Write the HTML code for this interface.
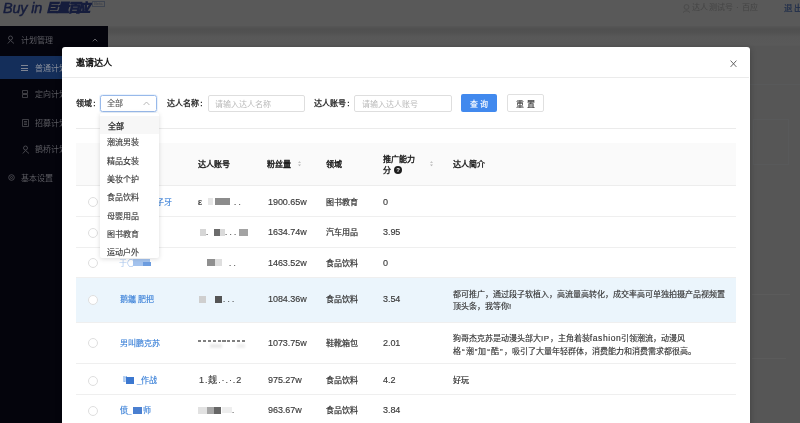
<!DOCTYPE html>
<html lang="zh-CN"><head><meta charset="utf-8">
<style>
*{margin:0;padding:0;box-sizing:border-box}
html,body{width:800px;height:423px;overflow:hidden;background:#565656;font-family:"Liberation Sans",sans-serif;}
.a{position:absolute}
.mi{position:absolute;color:#5c5c62;font-size:8px;line-height:10px;white-space:nowrap;margin-top:0.8px;filter:blur(0.25px)}
.t{position:absolute;white-space:nowrap;color:#333;font-size:8px;line-height:10px;margin-top:1.4px;-webkit-text-stroke:0.22px #333}
.th{color:#1c1c1c;-webkit-text-stroke:0.38px #1c1c1c}
.n{font-size:9px;letter-spacing:-0.05px;color:#3a3a3a;-webkit-text-stroke:0.15px #3a3a3a;margin-top:0.2px;margin-left:0.5px}
.line{position:absolute;background:#ebebeb;height:1px}
.row{position:absolute;left:76px;width:660px;border-bottom:1px solid #efefef}
.radio{position:absolute;width:10px;height:10px;border:1px solid #dedede;border-radius:50%;background:#fff}
.nm{color:#3d82d8;-webkit-text-stroke:0.15px #3d82d8}
.blk{position:absolute;height:7px}
.opt{position:absolute;left:99px;width:59px;height:18.3px;padding-left:8px;padding-top:1px;font-size:8px;line-height:18.3px;color:#3a3a3a;white-space:nowrap;-webkit-text-stroke:0.15px #3a3a3a}
.bl{filter:blur(0.35px)}
body>div,body>svg{will-change:transform}
</style></head><body>
<!-- page header -->
<div class="a" style="left:0;top:0;width:800px;height:26px;background:#595959"></div>
<div class="a" style="left:108px;top:26px;width:692px;height:21px;background:linear-gradient(#565656 0px,#505050 3px,#525252 7px,#585858 11px,#595959 19px,#555 21px)"></div>

<!-- logo -->
<div class="a" style="left:3px;top:0px;font-size:14.5px;line-height:16px;color:#161d3c;font-style:italic;letter-spacing:-0.2px;-webkit-text-stroke:0.45px #161d3c">Buy in</div>
<div class="a bl" style="left:46px;top:1px;font-size:12px;line-height:14px;color:#4a5080;font-weight:bold;font-style:italic;letter-spacing:-1.2px;-webkit-text-stroke:0.9px #161d3c">巨量百应</div>
<div class="a" style="left:91.5px;top:1px;width:12.5px;height:5.5px;border:0.8px solid #3e4450;border-radius:0.5px;font-size:4px;line-height:4px;color:#3a3f4a;text-align:center;overflow:hidden">Beta</div>
<!-- header right -->
<svg class="a" style="left:682px;top:3px" width="10" height="10" viewBox="0 0 10 10"><circle cx="4.5" cy="4" r="2.4" fill="none" stroke="#4a4a4a" stroke-width="0.9"/><path d="M1 9.5Q4.5 6 8 9.5" fill="none" stroke="#4a4a4a" stroke-width="0.9"/></svg>
<div class="a" style="left:692px;top:3px;font-size:8px;line-height:10px;color:#444;white-space:nowrap;letter-spacing:0.3px;filter:blur(0.4px)">达人测试号 · 百应</div>
<div class="a" style="left:783.5px;top:3px;font-size:8.5px;line-height:11px;color:#1a2a4a;white-space:nowrap;letter-spacing:1.2px;-webkit-text-stroke:0.15px #1a2a4a">退出</div>

<!-- sidebar -->
<div class="a" style="left:0;top:26px;width:108px;height:397px;background:#04040c"></div>
<svg class="a" style="left:7px;top:35px" width="8" height="9" viewBox="0 0 8 9"><circle cx="3.5" cy="3" r="2" fill="none" stroke="#56565c" stroke-width="0.8"/><path d="M0.8 8.5L3.5 5.5L7 8.5" fill="none" stroke="#56565c" stroke-width="0.8"/></svg>
<div class="mi" style="left:21px;top:35px">计划管理</div>
<svg class="a" style="left:92px;top:38px" width="6" height="4" viewBox="0 0 6 4"><path d="M0.7 3.3L3 1L5.3 3.3" fill="none" stroke="#77777b" stroke-width="0.8"/></svg>
<div class="a" style="left:0;top:56px;width:108px;height:23px;background:#142e5a"></div>
<div class="a" style="left:21px;top:65px;width:7px;height:0.8px;background:#7f8593"></div>
<div class="a" style="left:21px;top:67.5px;width:7px;height:0.8px;background:#7f8593"></div>
<div class="a" style="left:21px;top:70px;width:7px;height:0.8px;background:#7f8593"></div>
<div class="mi" style="left:35px;top:63px;color:#8a909c">普通计划</div>
<svg class="a" style="left:22px;top:90px" width="6" height="8" viewBox="0 0 6 8"><path d="M0.5 0.5H5.5V3.5H0.5ZM0.5 4.5H5.5V7.5H0.5Z" fill="none" stroke="#56565c" stroke-width="0.7"/></svg>
<div class="mi" style="left:35px;top:89px">定向计划</div>
<svg class="a" style="left:22px;top:119px" width="7" height="8" viewBox="0 0 7 8"><path d="M0.5 0.5H6.5V7.5H0.5ZM2 2.5H5M2 4H5M2 5.5H5" fill="none" stroke="#56565c" stroke-width="0.7"/></svg>
<div class="mi" style="left:35px;top:118px">招募计划</div>
<svg class="a" style="left:22px;top:145px" width="8" height="9" viewBox="0 0 8 9"><circle cx="3.5" cy="3" r="2" fill="none" stroke="#56565c" stroke-width="0.8"/><path d="M0.8 8.5L3.5 5.5L7 8.5" fill="none" stroke="#56565c" stroke-width="0.8"/></svg>
<div class="mi" style="left:35px;top:144px">鹊桥计划</div>
<svg class="a" style="left:8px;top:174px" width="7" height="7" viewBox="0 0 7 7"><circle cx="3.5" cy="3.5" r="2.8" fill="none" stroke="#56565c" stroke-width="0.8"/><circle cx="3.5" cy="3.5" r="1" fill="none" stroke="#56565c" stroke-width="0.7"/></svg>
<div class="mi" style="left:21px;top:173px">基本设置</div>

<!-- right page faint structure -->
<div class="a" style="left:750px;top:84px;width:50px;height:1px;background:#58595a"></div>
<div class="a" style="left:753px;top:119px;width:36px;height:46px;border:1px solid #58595a"></div>
<div class="a" style="left:752px;top:294px;width:38px;height:1px;background:#5b5b5b"></div>
<div class="a" style="left:752px;top:358px;width:34px;height:1px;background:#5b5b5b"></div>

<!-- modal -->
<div class="a" style="left:62px;top:47px;width:687.5px;height:400px;background:#fff;border-radius:3px;box-shadow:0 2px 6px rgba(0,0,0,.25)"></div>
<div class="t" style="margin-top:0;left:76px;top:57px;font-size:9px;line-height:12px;color:#111;-webkit-text-stroke:0.4px #111">邀请达人</div>
<svg class="a" style="left:730px;top:59.5px" width="7" height="7.5" viewBox="0 0 7 7.5"><path d="M0.6 0.6L6.4 6.9M6.4 0.6L0.6 6.9" stroke="#555" stroke-width="0.9"/></svg>
<div class="line" style="left:62px;top:77px;width:687px"></div>

<!-- filter -->
<div class="t th" style="left:76px;top:98px;-webkit-text-stroke:0.28px #1f1f1f">领域<span style="margin-left:1.2px">:</span></div>
<div class="a" style="left:100px;top:95px;width:57px;height:17px;border:1px solid #98b9ea;border-radius:2.5px;box-shadow:0 0 0 0.8px rgba(150,190,240,.25)"></div>
<div class="t" style="left:107px;top:98px;color:#555;-webkit-text-stroke:0.1px #555">全部</div>
<svg class="a" style="left:143px;top:100.5px" width="7" height="5" viewBox="0 0 7 5"><path d="M0.6 4L3.5 1L6.4 4" stroke="#b0b0b0" stroke-width="0.9" fill="none"/></svg>
<div class="t th" style="left:166.5px;top:98px;-webkit-text-stroke:0.28px #1f1f1f">达人名称<span style="margin-left:1.2px">:</span></div>
<div class="a" style="left:207.5px;top:95px;width:96.5px;height:17px;border:1px solid #dedede;border-radius:2px"></div>
<div class="t" style="left:214.5px;top:98.5px;color:#b9b9b9;-webkit-text-stroke:0 #000">请输入达人名称</div>
<div class="t th" style="left:313.5px;top:98px;-webkit-text-stroke:0.28px #1f1f1f">达人账号<span style="margin-left:1.2px">:</span></div>
<div class="a" style="left:354px;top:95px;width:97.5px;height:17px;border:1px solid #dedede;border-radius:2px"></div>
<div class="t" style="left:361.5px;top:98.5px;color:#b9b9b9;-webkit-text-stroke:0 #000">请输入达人账号</div>
<div class="a" style="left:461px;top:94px;width:36px;height:18px;background:#4189ee;border-radius:2px"></div>
<div class="t" style="left:461px;top:98.5px;width:36px;text-align:center;color:#fff;letter-spacing:2.5px;text-indent:2.5px;-webkit-text-stroke:0.15px #fff">查询</div>
<div class="a" style="left:507px;top:94px;width:36.5px;height:18px;border:1px solid #e0e0e0;border-radius:2px"></div>
<div class="t" style="left:507px;top:98.5px;width:36.5px;text-align:center;color:#333;letter-spacing:2.5px;text-indent:2.5px;-webkit-text-stroke:0.15px #333">重置</div>
<div class="line" style="left:76px;top:128px;width:660px"></div>

<!-- table header -->
<div class="a" style="left:76px;top:143px;width:660px;height:43px;background:#fafafa;border-bottom:1px solid #ededed"></div>
<div class="t th" style="left:197.5px;top:159px">达人账号</div>
<div class="t th" style="left:267px;top:159px">粉丝量</div>
<svg class="a" style="left:296.7px;top:160px" width="5" height="8" viewBox="0 0 5 8"><path d="M1 2.8L2.5 1.2L4 2.8ZM1 4.6L2.5 6.2L4 4.6Z" fill="#b4b4b4"/></svg>
<div class="t th" style="left:325.5px;top:159px">领域</div>
<div class="t th" style="left:382.5px;top:154px">推广能力</div>
<div class="t th" style="left:382.5px;top:165px">分</div>
<div class="a" style="left:393.5px;top:166px;width:8px;height:8px;border-radius:50%;background:#1e1e1e;color:#fff;font-size:6px;line-height:8px;text-align:center;font-weight:bold">?</div>
<svg class="a" style="left:428.7px;top:160px" width="5" height="8" viewBox="0 0 5 8"><path d="M1 2.8L2.5 1.2L4 2.8ZM1 4.6L2.5 6.2L4 4.6Z" fill="#b4b4b4"/></svg>
<div class="t th" style="left:453px;top:159px">达人简介</div>

<!-- rows -->
<div class="row" style="top:186px;height:31px"></div>
<div class="row" style="top:217px;height:31px"></div>
<div class="row" style="top:248px;height:30px"></div>
<div class="row" style="top:277.5px;height:44.5px;background:#ebf5fc"></div>
<div class="row" style="top:322px;height:42px"></div>
<div class="row" style="top:364px;height:31px"></div>
<div class="row" style="top:395px;height:31px"></div>

<!-- radios -->
<div class="radio" style="left:88.2px;top:197px"></div>
<div class="radio" style="left:88.2px;top:227.5px"></div>
<div class="radio" style="left:88.2px;top:258px"></div>
<div class="radio" style="left:88.2px;top:294.5px"></div>
<div class="radio" style="left:88.2px;top:338px"></div>
<div class="radio" style="left:88.2px;top:375.5px"></div>
<div class="radio" style="left:88.2px;top:405.5px"></div>

<!-- row 1 -->
<div class="t nm" style="left:155.5px;top:196.5px">子牙</div>
<div class="t" style="left:197.5px;top:196px;font-size:9px;color:#444">ε</div>
<div class="blk" style="left:208px;top:198px;width:5px;background:#e6e6e6"></div>
<div class="blk" style="left:214.5px;top:198px;width:14.5px;background:#8c8c8c"></div>
<div class="t" style="left:234px;top:196.5px;color:#666">. .</div>
<div class="t n" style="left:267px;top:196.5px">1900.65w</div>
<div class="t" style="left:325.5px;top:196.5px">图书教育</div>
<div class="t n" style="left:382.5px;top:196.5px">0</div>
<!-- row 2 -->
<div class="blk" style="left:200px;top:228.5px;width:6px;background:#d6d6d6"></div>
<div class="t" style="left:206px;top:227px;color:#666">.</div>
<div class="blk" style="left:213.5px;top:228.5px;width:6px;background:#6c6c6c"></div>
<div class="blk" style="left:220px;top:228.5px;width:5px;background:#dadada"></div>
<div class="t" style="left:225px;top:227px;color:#777">. . .</div>
<div class="blk" style="left:239px;top:228.5px;width:9px;background:#a3a3a3"></div>
<div class="t n" style="left:267px;top:227px">1634.74w</div>
<div class="t" style="left:325.5px;top:227px">汽车用品</div>
<div class="t n" style="left:382.5px;top:227px">3.95</div>
<!-- row 3 -->
<div class="t nm bl" style="left:119px;top:257.5px;color:#a9c6ee;-webkit-text-stroke:0">于〇</div>
<div class="blk" style="left:133px;top:259px;width:17px;height:7px;background:#a4c3ee;filter:blur(0.6px)"></div>
<div class="blk" style="left:143px;top:262px;width:8px;height:4px;background:#6d9de0;filter:blur(0.6px)"></div>
<div class="blk" style="left:207px;top:259px;width:8px;background:#8f8f8f"></div>
<div class="blk" style="left:215px;top:259px;width:7px;background:#dedede"></div>
<div class="t" style="left:229px;top:257.5px;color:#777">. .</div>
<div class="t n" style="left:267px;top:257.5px">1463.52w</div>
<div class="t" style="left:325.5px;top:257.5px">食品饮料</div>
<div class="t n" style="left:382.5px;top:257.5px">0</div>
<!-- row 4 -->
<div class="t nm bl" style="left:119.5px;top:294px">鹅鑴 肥把</div>
<div class="blk" style="left:199px;top:295.5px;width:7px;background:#cfcfcf"></div>
<div class="blk" style="left:214.5px;top:295.5px;width:7px;background:#555"></div>
<div class="t" style="left:223px;top:294px;color:#777">. . .</div>
<div class="t n" style="left:267px;top:294px">1084.36w</div>
<div class="t" style="left:325.5px;top:294px">食品饮料</div>
<div class="t n" style="left:382.5px;top:294px">3.54</div>
<div class="t" style="left:453px;top:287.5px;line-height:12px;-webkit-text-stroke:0.15px #333">都可推广，通过段子软植入，高流量高转化，成交率高可单独拍摄产品视频置<br>顶头条，我等你!</div>
<!-- row 5 -->
<div class="t nm bl" style="left:119.5px;top:337.5px">男叫鹏</div>
<div class="t nm" style="left:144px;top:337.5px">克苏</div>
<div class="a" style="left:198px;top:339.5px;width:49px;height:2px;background:repeating-linear-gradient(90deg,#808080 0 3px,transparent 3px 4.9px);filter:blur(0.4px)"></div>
<div class="blk" style="left:210px;top:343.5px;width:12px;height:4px;background:#eaeaea;filter:blur(0.8px)"></div>
<div class="blk" style="left:237px;top:343.5px;width:8px;height:4px;background:#efefef;filter:blur(0.8px)"></div>
<div class="t n" style="left:267px;top:337.5px">1073.75w</div>
<div class="t" style="left:325.5px;top:337.5px">鞋靴箱包</div>
<div class="t n" style="left:382.5px;top:337.5px">2.01</div>
<div class="t" style="left:453px;top:331px;line-height:12.5px;-webkit-text-stroke:0.15px #333">狗哥杰克苏是动漫头部大<span style="letter-spacing:0.6px">IP</span>，主角着装<span style="letter-spacing:0.6px;font-size:8.5px">fashion</span>引领潮流，动漫风<br>格<span style="margin:0 1px">“</span>潮<span style="margin:0 1px">”</span>加<span style="margin:0 1px">“</span>酷<span style="margin:0 1px">”</span>，吸引了大量年轻群体，消费能力和消费需求都很高。</div>
<!-- row 6 -->
<div class="t nm bl" style="left:119px;top:375px">『</div>
<div class="blk" style="left:126px;top:376.5px;width:8px;background:#3c78d0"></div>
<div class="t nm" style="left:137px;top:375px">_作战</div>
<div class="t bl n" style="left:198px;top:375px;color:#444;letter-spacing:0.9px">1.觌.·.·.2</div>
<div class="t n" style="left:267px;top:375px">975.27w</div>
<div class="t" style="left:325.5px;top:375px">食品饮料</div>
<div class="t n" style="left:382.5px;top:375px">4.2</div>
<div class="t" style="left:453px;top:375px">好玩</div>
<!-- row 7 -->
<div class="t nm bl" style="left:119.5px;top:405px">偾</div>
<div class="t nm" style="left:127px;top:405px">_</div>
<div class="blk" style="left:133px;top:406.5px;width:9px;background:#4a7fd0;filter:blur(0.3px)"></div>
<div class="t nm" style="left:143px;top:405px">师</div>
<div class="blk" style="left:198px;top:406.5px;width:9px;background:#e2e2e2"></div>
<div class="blk" style="left:207px;top:406.5px;width:7px;background:#a6a6a6"></div>
<div class="blk" style="left:214px;top:406.5px;width:7px;background:#666"></div>
<div class="blk" style="left:222px;top:407px;width:10px;height:6px;background:#eee"></div>
<div class="t" style="left:232px;top:405px;color:#999">.</div>
<div class="t n" style="left:267px;top:405px">963.67w</div>
<div class="t" style="left:325.5px;top:405px">食品饮料</div>
<div class="t n" style="left:382.5px;top:405px">3.84</div>

<!-- dropdown -->
<div class="a" style="left:99.5px;top:113px;width:58.5px;height:145px;background:#fff;box-shadow:0 1px 5px rgba(0,0,0,.14);border-radius:2px"></div>
<div class="opt" style="top:115.5px;left:99.5px;width:58.5px;height:17.5px;line-height:17.5px;padding-top:1.5px;background:#f7f7f7;color:#222;-webkit-text-stroke:0.25px #222">全部</div>
<div class="opt" style="top:133.3px">潮流男装</div>
<div class="opt" style="top:151.6px">精品女装</div>
<div class="opt" style="top:169.9px">美妆个护</div>
<div class="opt" style="top:188.2px">食品饮料</div>
<div class="opt" style="top:206.5px">母婴用品</div>
<div class="opt" style="top:224.8px">图书教育</div>
<div class="opt" style="top:243.1px">运动户外</div>
</body></html>
